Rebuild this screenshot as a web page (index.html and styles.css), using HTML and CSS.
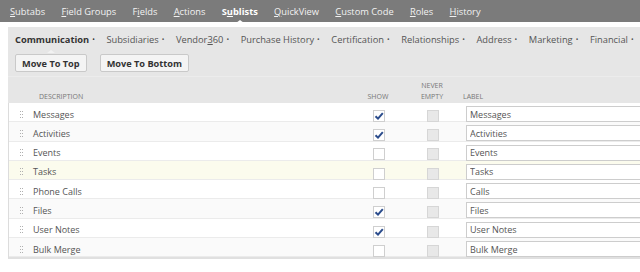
FILE: index.html
```html
<!DOCTYPE html>
<html lang="en">
<head>
  <meta charset="UTF-8" />
  <title>Sublists</title>
  <meta name="viewport" content="width=device-width, initial-scale=1" />
  <link rel="stylesheet" href="styles.css">
</head>
<body>
  <div class="topnav">
    <span class="tab"><u>S</u>ubtabs</span>
    <span class="tab"><u>F</u>ield Groups</span>
    <span class="tab">F<u>i</u>elds</span>
    <span class="tab"><u>A</u>ctions</span>
    <span class="tab active">S<u>u</u>blists</span>
    <span class="tab"><u>Q</u>uickView</span>
    <span class="tab"><u>C</u>ustom Code</span>
    <span class="tab"><u>R</u>oles</span>
    <span class="tab"><u>H</u>istory</span>
  </div>

  <div class="panel">
    <div class="subtabs">
      <span class="subtab active">Communication</span>
      <span class="subtab">Subsidiaries</span>
      <span class="subtab">Vendor<u>3</u>60</span>
      <span class="subtab">Purchase History</span>
      <span class="subtab">Certification</span>
      <span class="subtab">Relationships</span>
      <span class="subtab">Address</span>
      <span class="subtab">Marketing</span>
      <span class="subtab">Financial</span>
    </div>

    <div class="buttons">
      <button class="btn">Move To Top</button>
      <button class="btn">Move To Bottom</button>
    </div>

    <div class="grid head">
      <div></div>
      <div class="th first">DESCRIPTION</div>
      <div class="th center">SHOW</div>
      <div class="th center">NEVER<br />EMPTY</div>
      <div class="th">LABEL</div>
    </div>

    <div id="rows"></div>
  </div>

  <script>
    const rows = [
      ["Messages", true, "Messages"],
      ["Activities", true, "Activities"],
      ["Events", false, "Events"],
      ["Tasks", false, "Tasks"],
      ["Phone Calls", false, "Calls"],
      ["Files", true, "Files"],
      ["User Notes", true, "User Notes"],
      ["Bulk Merge", false, "Bulk Merge"]
    ];

    const check = '<svg width="10" height="8" viewBox="0 0 10 8"><path d="M1.5 4.2 L4 6.6 L8.8 1.2" fill="none" stroke="#2b4c8c" stroke-width="2"/></svg>';

    const list = document.getElementById("rows");
    rows.forEach(function (r, i) {
      const row = document.createElement("div");
      row.className = "grid row" + (i === 3 ? " hover" : "") + (i % 2 === 1 ? " alt" : "");
      row.innerHTML =
        '<div class="handle"><span></span><span></span><span></span><span></span><span></span><span></span></div>' +
        '<div class="desc">' + r[0] + '</div>' +
        '<div class="center"><span class="cb">' + (r[1] ? check : "") + '</span></div>' +
        '<div class="center"><span class="cb disabled"></span></div>' +
        '<div><input class="label-input" value="' + r[2] + '" /></div>';
      list.appendChild(row);
    });
  </script>
</body>
</html>
```

FILE: styles.css
```css
body {
  margin: 0;
  font-family: "Open Sans", Arial, sans-serif;
  background: white;
  width: 640px;
  height: 272px;
  overflow: hidden;
}

.topnav {
  background: #7b7b7b;
  height: 22px;
  display: flex;
  align-items: center;
  padding-left: 10px;
  gap: 16.3px;
  margin-bottom: 5px;
  white-space: nowrap;
}

.tab {
  position: relative;
  color: #f2f2f2;
  font-size: 9.3px;
}

.tab.active {
  font-weight: bold;
  color: white;
}

.tab.active::before,
.subtab.active::before {
  content: "";
  position: absolute;
  left: 50%;
  margin-left: -4px;
  border-left: 4px solid transparent;
  border-right: 4px solid transparent;
  border-bottom: 3px solid white;
}

.tab.active::before {
  bottom: -5px;
}

.panel {
  margin-left: 8px;
  width: 660px;
  background: #e6e6e6;
}

.subtabs {
  height: 24px;
  display: flex;
  align-items: center;
  padding-left: 7px;
  gap: 11.6px;
  white-space: nowrap;
}

.subtab {
  position: relative;
  font-size: 9.3px;
  color: #555;
}

.subtab::after {
  content: "•";
  margin-left: 3px;
  font-size: 7px;
  font-weight: normal;
  vertical-align: 1px;
}

.subtab.active {
  font-weight: bold;
  color: #333;
}

.subtab.active::before {
  bottom: -7px;
  margin-left: -8px;
  border-bottom-color: #f2f2f2;
}

.buttons {
  display: flex;
  gap: 13px;
  padding: 3px 0 0 7px;
  height: 22px;
  border-bottom: 1px solid #ececec;
}

.btn {
  font-family: inherit;
  font-size: 9.2px;
  font-weight: bold;
  color: #333;
  background: #f4f4f4;
  border: 1px solid #c9c9c9;
  border-radius: 2px;
  height: 18px;
  padding: 0 6px;
}

.grid {
  display: grid;
  grid-template-columns: 24px 323px 46px 62px 1fr;
  align-items: center;
}

.head {
  height: 26px;
}

.th {
  font-size: 7px;
  color: #777;
  line-height: 11px;
  align-self: end;
  padding-bottom: 1px;
}

.th.first {
  padding-left: 7px;
}

.center {
  text-align: center;
}

#rows {
  background: white;
  border-left: 1px solid #dcdcdc;
  border-bottom: 2px solid #e0e0e0;
}

.row {
  height: 18.3px;
  border-bottom: 1px solid #ebebeb;
  background: white;
}

.row.alt {
  background: #fafafa;
}

.row.hover {
  background: #fbfbed;
}

.handle {
  display: grid;
  grid-template-columns: 1px 1px;
  gap: 2px 1px;
  justify-content: center;
  margin-left: 1px;
}

.handle span {
  width: 1px;
  height: 1px;
  background: #b0b0b0;
}

.desc {
  font-size: 9px;
  color: #555;
}

.cb {
  display: inline-block;
  width: 10px;
  height: 10px;
  border: 1px solid #cfcfcf;
  background: white;
  vertical-align: middle;
  text-align: left;
  line-height: 0;
}

.cb svg {
  margin: 1px 0 0 0;
}

.cb.disabled {
  background: #e8e8e8;
  border-color: #d6d6d6;
}

.label-input {
  display: block;
  box-sizing: border-box;
  margin-left: 2px;
  width: 220px;
  height: 16px;
  border: 1px solid #cdcdcd;
  font-family: inherit;
  font-size: 9px;
  color: #555;
  padding: 0 3px;
  outline: none;
}
```
